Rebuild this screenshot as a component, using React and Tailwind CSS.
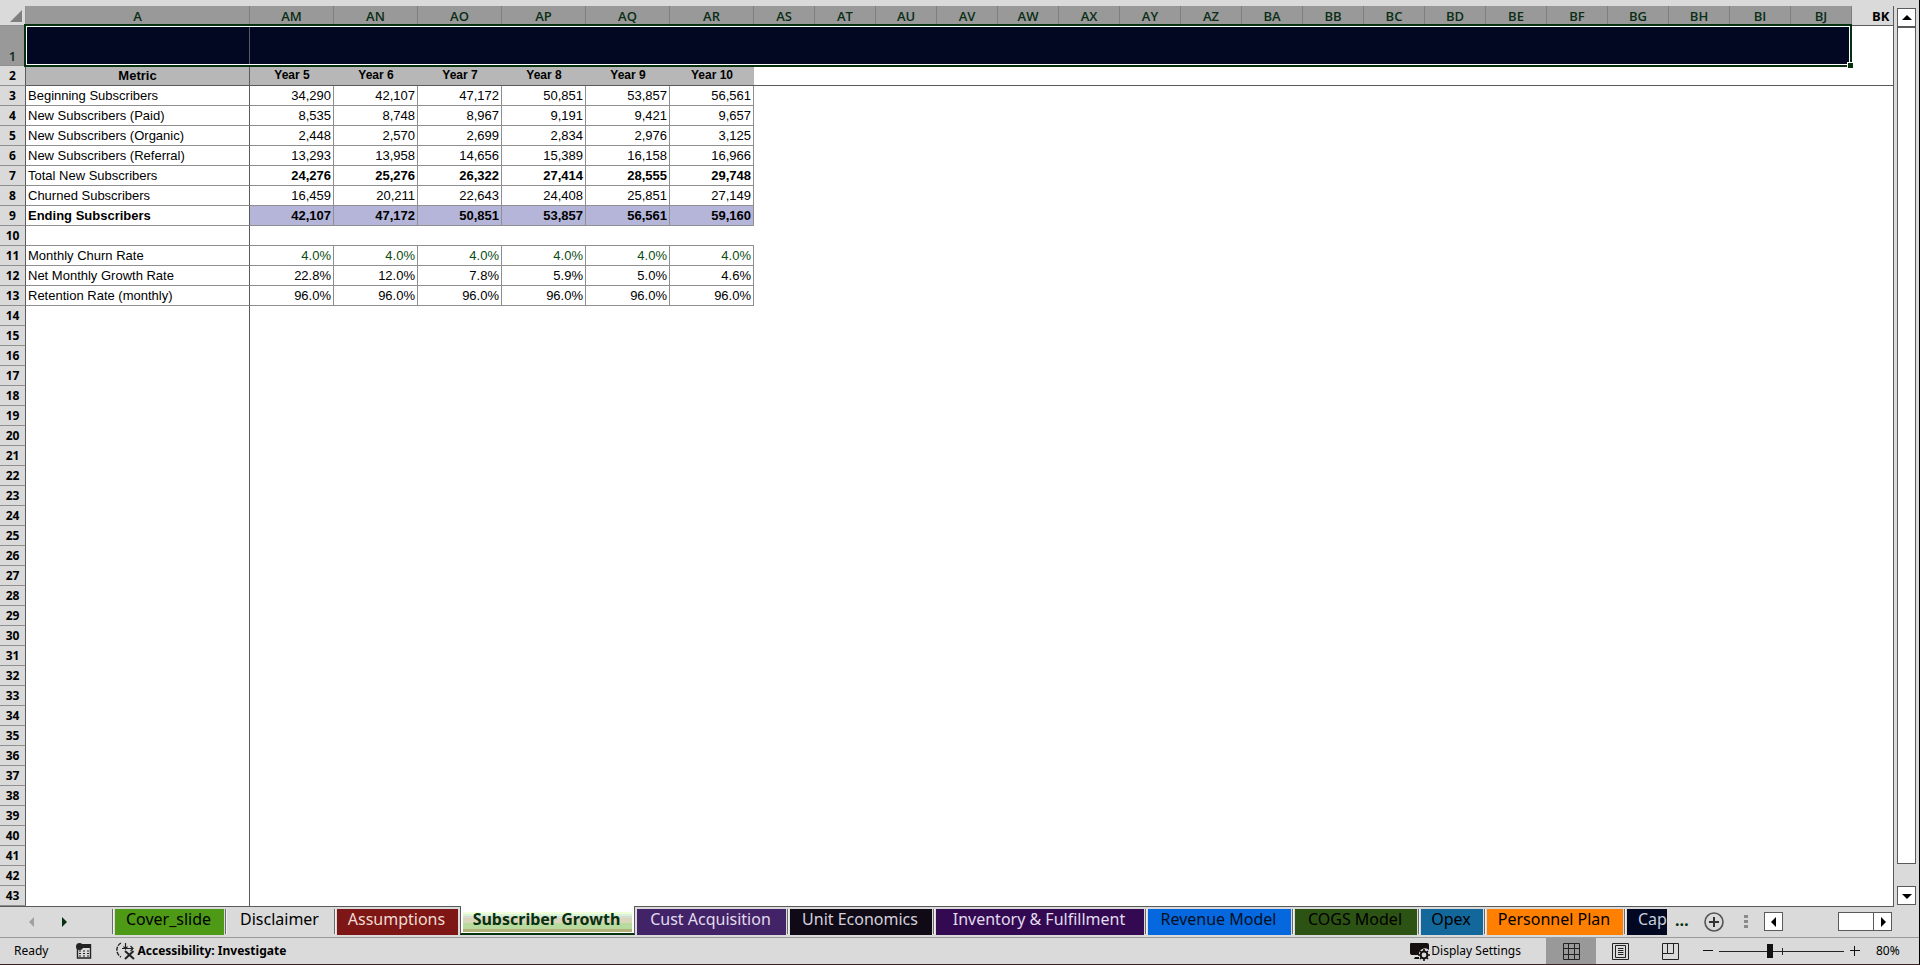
import React, { useState } from 'react';
import clsx from 'clsx';

const narrowColumns = [
  'AS', 'AT', 'AU', 'AV', 'AW', 'AX', 'AY', 'AZ', 'BA',
  'BB', 'BC', 'BD', 'BE', 'BF', 'BG', 'BH', 'BI', 'BJ',
];
const yearColumns = ['AM', 'AN', 'AO', 'AP', 'AQ', 'AR'];
const years = ['Year 5', 'Year 6', 'Year 7', 'Year 8', 'Year 9', 'Year 10'];

const rows = [
  { n: 3, label: 'Beginning Subscribers', values: ['34,290', '42,107', '47,172', '50,851', '53,857', '56,561'] },
  { n: 4, label: 'New Subscribers (Paid)', values: ['8,535', '8,748', '8,967', '9,191', '9,421', '9,657'] },
  { n: 5, label: 'New Subscribers (Organic)', values: ['2,448', '2,570', '2,699', '2,834', '2,976', '3,125'] },
  { n: 6, label: 'New Subscribers (Referral)', values: ['13,293', '13,958', '14,656', '15,389', '16,158', '16,966'] },
  { n: 7, label: 'Total New Subscribers', values: ['24,276', '25,276', '26,322', '27,414', '28,555', '29,748'], style: 'font-bold' },
  { n: 8, label: 'Churned Subscribers', values: ['16,459', '20,211', '22,643', '24,408', '25,851', '27,149'] },
  { n: 9, label: 'Ending Subscribers', values: ['42,107', '47,172', '50,851', '53,857', '56,561', '59,160'], style: 'font-bold bg-[#b4b5d9]', boldLabel: true },
  { n: 10, label: '', values: null },
  { n: 11, label: 'Monthly Churn Rate', values: ['4.0%', '4.0%', '4.0%', '4.0%', '4.0%', '4.0%'], style: 'text-[#0b4a12]' },
  { n: 12, label: 'Net Monthly Growth Rate', values: ['22.8%', '12.0%', '7.8%', '5.9%', '5.0%', '4.6%'] },
  { n: 13, label: 'Retention Rate (monthly)', values: ['96.0%', '96.0%', '96.0%', '96.0%', '96.0%', '96.0%'] },
];

const emptyRows = Array.from({ length: 30 }, (_, i) => i + 14);

const sheets = [
  { name: 'Cover_slide', width: 'w-[109px]', color: 'bg-[#4e9a16] text-black' },
  { name: 'Disclaimer', width: 'w-[105px]', color: 'text-black' },
  { name: 'Assumptions', width: 'w-[121px]', color: 'bg-[#7f1616] text-[#f0dcd0]' },
  { name: 'Subscriber Growth', width: 'w-[175px]', highlighted: true },
  { name: 'Cust Acquisition', width: 'w-[149px]', color: 'bg-[#432368] text-[#e2dcee]', noDivider: true },
  { name: 'Unit Economics', width: 'w-[142px]', color: 'bg-[#0f0a16] text-[#d4d0dc]' },
  { name: 'Inventory & Fulfillment', width: 'w-[208px]', color: 'bg-[#330a52] text-[#e2dcee]' },
  { name: 'Revenue Model', width: 'w-[143px]', color: 'bg-[#0568df] text-[#06101e]' },
  { name: 'COGS Model', width: 'w-[122px]', color: 'bg-[#2d5314] text-black' },
  { name: 'Opex', width: 'w-[62px]', color: 'bg-[#12679b] text-black' },
  { name: 'Personnel Plan', width: 'w-[136px]', color: 'bg-[#ff8000] text-black' },
  { name: 'Cap', width: 'w-[40px] pl-[11px]', color: 'bg-[#020722] text-[#c8cede]' },
];

const RowNumber = ({ children }) => (
  <th
    scope="row"
    className="h-5 border-b border-r border-b-[#8f8f8f] border-r-[#5a5a5a] bg-[#dadada] p-0 text-center align-bottom font-['Open_Sans',sans-serif] text-[12px] leading-[18px] font-bold"
  >
    {children}
  </th>
);

const ColumnHeader = ({ children, className }) => (
  <th
    scope="col"
    className={clsx(
      'h-5 border-b border-b-[#5a5a5a] p-0 align-bottom text-[13px] leading-[17px]',
      className || 'border-r border-r-[#7f7f7f] bg-[#999999] text-center font-semibold text-[#0a2e16]'
    )}
  >
    {children}
  </th>
);

const ArrowButton = ({ label, path, className }) => (
  <button
    type="button"
    aria-label={label}
    className={clsx('flex h-[19px] w-[19px] shrink-0 items-center justify-center border border-[#5a5a5a] bg-white', className)}
  >
    <svg width="10" height="10" viewBox="0 0 10 10">
      <path d={path} fill="#000" />
    </svg>
  </button>
);

const Sheet = () => (
  <div className="relative min-w-0 flex-1 border-r border-[#5a5a5a]">
    <table className="w-full table-fixed border-separate border-spacing-0 bg-white font-['Liberation_Sans',Arial,sans-serif] text-[13px] text-black">
      <colgroup>
        <col className="w-[26px]" />
        <col className="w-[224px]" />
        {yearColumns.map((c) => (
          <col key={c} className="w-[84px]" />
        ))}
        {narrowColumns.map((c) => (
          <col key={c} className="w-[61px]" />
        ))}
        <col />
      </colgroup>
      <thead className="font-['Open_Sans',sans-serif]">
        <tr>
          <td className="h-5 border-b border-r border-b-[#8f8f8f] border-r-[#8f8f8f] bg-[#dadada] p-0">
            <svg width="12" height="12" viewBox="0 0 12 12" className="ml-[10px]">
              <path d="M12 0V12H0Z" fill="#7f7f7f" />
            </svg>
          </td>
          <ColumnHeader>A</ColumnHeader>
          {yearColumns.map((c) => (
            <ColumnHeader key={c}>{c}</ColumnHeader>
          ))}
          {narrowColumns.map((c) => (
            <ColumnHeader key={c}>{c}</ColumnHeader>
          ))}
          <ColumnHeader className="bg-[#dadada] pl-5 text-left font-bold text-black">BK</ColumnHeader>
        </tr>
      </thead>
      <tbody>
        {/* Title band */}
        <tr>
          <th
            scope="row"
            className="h-10 border-b border-r border-[#8f8f8f] bg-[#999999] p-0 text-center align-bottom font-['Open_Sans',sans-serif] text-[13px] leading-[18px] font-semibold text-[#0a2e16]"
          >
            1
          </th>
          <td className="border-r border-[#5a5a5a] bg-[#020722] p-0"></td>
          <td colSpan={24} className="bg-[#020722] p-0"></td>
          <td className="p-0"></td>
        </tr>

        {/* Table headings */}
        <tr>
          <RowNumber>2</RowNumber>
          <th scope="col" className="border-b border-r border-[#5a5a5a] bg-[#b7b7b7] p-0 leading-[17px]">
            Metric
          </th>
          {years.map((y) => (
            <th key={y} scope="col" className="border-b border-[#5a5a5a] bg-[#b7b7b7] p-0 text-[12px] leading-[17px]">
              {y}
            </th>
          ))}
          <td colSpan={19} className="border-b border-[#5a5a5a] p-0"></td>
        </tr>

        {rows.map((row) => (
          <tr key={row.n}>
            <RowNumber>{row.n}</RowNumber>
            <td
              className={clsx(
                'border-b border-r border-b-[#8f8f8f] border-r-[#5a5a5a] py-0 pl-[2px] leading-[19px]',
                row.boldLabel && 'font-bold'
              )}
            >
              {row.label}
            </td>
            {row.values ? (
              row.values.map((value, i) => (
                <td
                  key={i}
                  className={clsx('border-b border-r border-[#8f8f8f] py-0 pr-[2px] text-right leading-[19px]', row.style)}
                >
                  {value}
                </td>
              ))
            ) : (
              <td colSpan={6} className="border-b border-[#8f8f8f] p-0"></td>
            )}
            <td colSpan={19} className="p-0"></td>
          </tr>
        ))}

        {emptyRows.map((n) => (
          <tr key={n}>
            <RowNumber>{n}</RowNumber>
            <td className="border-r border-[#5a5a5a] p-0"></td>
            <td colSpan={25} className="p-0"></td>
          </tr>
        ))}
      </tbody>
    </table>

    {/* Selection frame with its fill handle */}
    <div className="pointer-events-none absolute top-[18px] left-[24px] h-[43px] w-[1828px] border-2 border-[#06310f]">
      <div className="h-full border border-white"></div>
      <div className="absolute -right-[3px] -bottom-[3px] h-[6px] w-[6px] border-t border-l border-white bg-[#06310f]"></div>
    </div>
  </div>
);

const VerticalScrollbar = () => (
  <div className="flex w-[25px] shrink-0 flex-col pt-[2px] pr-[3px] pb-px pl-[3px]">
    <ArrowButton label="Scroll up" path="M0 7L5 2L10 7Z" />
    <div className="flex-1 pb-[22px]">
      <div className="h-full w-[19px] border border-[#5a5a5a] bg-white"></div>
    </div>
    <ArrowButton label="Scroll down" path="M0 3H10L5 8Z" />
  </div>
);

const SheetTab = ({ sheet, selected, onSelect }) => {
  if (sheet.highlighted) {
    return (
      <button
        type="button"
        role="tab"
        aria-selected={selected}
        onClick={onSelect}
        className={clsx(
          'relative mx-[2px] -mt-px h-[29px] shrink-0 border-x border-b-2 border-x-[#5a5a5a] border-b-[#06310f] bg-white px-[2px] pt-[6px] pb-px text-[16px] leading-[15px] font-bold whitespace-nowrap text-[#06310f]',
          sheet.width
        )}
      >
        <span className="block h-5 bg-[linear-gradient(#f0ffd8_0_2px,#d8f5dc_2px_4px,#d8dcd4_4px_6px,#dad6ba_6px_11px,#b8da9e_11px_17px,#b0b078_17px)] pr-[2px]">
          {sheet.name}
        </span>
      </button>
    );
  }

  return (
    <div className="flex shrink-0 items-start pt-[2px]">
      {!sheet.noDivider && <span className="mx-px h-[25px] w-[2px] border-l border-[#6a6a6a] bg-[#f0f0f0]"></span>}
      <button
        type="button"
        role="tab"
        aria-selected={selected}
        onClick={onSelect}
        className={clsx('h-[26px] overflow-hidden pr-[2px] pb-[5px] text-[16px] leading-[21px] whitespace-nowrap', sheet.width, sheet.color)}
      >
        {sheet.name}
      </button>
    </div>
  );
};

const SheetTabs = ({ active, onSelect }) => (
  <div className="flex h-8 items-start border-b border-[#9a9a9a] font-['Noto_Sans',sans-serif]">
    <div className="flex h-full flex-1 items-start border-t border-[#5a5a5a] pr-[2px]">
      <div className="flex w-[111px] shrink-0 items-center gap-6 pt-[9px] pl-[28px]">
        <button type="button" aria-label="Previous sheets">
          <svg width="8" height="12" viewBox="0 0 8 12">
            <path d="M6 1V11L1 6Z" fill="#a0a0a0" />
          </svg>
        </button>
        <button type="button" aria-label="More sheets">
          <svg width="8" height="12" viewBox="0 0 8 12">
            <path d="M2 1V11L7 6Z" fill="#06310f" />
          </svg>
        </button>
      </div>

      <div role="tablist" aria-label="Sheets" className="flex items-start">
        {sheets.map((sheet) => (
          <SheetTab key={sheet.name} sheet={sheet} selected={active === sheet.name} onSelect={() => onSelect(sheet.name)} />
        ))}
      </div>

      <button type="button" aria-label="All sheets" className="ml-2 pt-[2px] text-[16px] leading-[22px] font-bold text-[#06310f]">
        …
      </button>
      <div className="ml-auto flex h-full items-center pb-px">
        <button type="button" aria-label="New sheet">
          <svg width="20" height="20" viewBox="0 0 20 20" fill="none">
            <circle cx="10" cy="10" r="9" stroke="#555" strokeWidth="1.6" />
            <path d="M10 5V15M5 10H15" stroke="#333" strokeWidth="2" />
          </svg>
        </button>
        <svg width="4" height="14" viewBox="0 0 4 14" className="ml-5" fill="#8a8a8a">
          <path d="M0 0H4V3H0ZM0 5H4V8H0ZM0 10H4V13H0Z" />
        </svg>
        <ArrowButton label="Scroll left" path="M7 0V10L2 5Z" className="ml-4" />
        <div className="w-[55px]"></div>
        <div className="h-[19px] w-[36px] border border-[#5a5a5a] bg-white"></div>
        <ArrowButton label="Scroll right" path="M3 0V10L8 5Z" className="-ml-px" />
      </div>
    </div>
    <div className="w-[25px] shrink-0"></div>
  </div>
);

const StatusBar = () => {
  const [zoom, setZoom] = useState(80);

  return (
    <div className="flex h-[26px] items-center font-['Noto_Sans',sans-serif] text-[12px] text-black">
      <span className="ml-[14px]">Ready</span>
      <button type="button" aria-label="Record macro" className="ml-7">
        <svg width="16" height="16" viewBox="0 0 16 16">
          <path d="M1.5 3V15H14.5V2H6" fill="none" stroke="#222" strokeWidth="1.4" />
          <path d="M6 1H15V5H6Z" fill="#222" />
          <circle cx="3.5" cy="3.5" r="3.5" fill="#222" />
          <path d="M3 8H5M7 8H9M11 8H13M3 10.5H5M7 10.5H9M11 10.5H13M3 13H5M7 13H9M11 13H13" stroke="#222" strokeWidth="1.2" />
        </svg>
      </button>
      <button type="button" className="ml-[23px] flex items-center gap-[2px] font-bold">
        <svg width="20" height="18" viewBox="0 0 20 18" fill="none" stroke="#222" strokeWidth="1.4">
          <path d="M6 1A8 8 0 0 0 6 15" strokeDasharray="4 1.2" />
          <path d="M7 6.5H18M10.5 1V7M8.5 4.5L10.5 7L12.5 4.5M15.5 4L18 6.5L15.5 9" strokeWidth="1.2" />
          <path d="M10 9L19 17M18.5 9L10 17" strokeWidth="2" />
        </svg>
        Accessibility: Investigate
      </button>

      <div className="ml-auto flex h-full items-center">
        <button type="button" className="mr-[25px] flex items-center gap-px">
          <svg width="20" height="19" viewBox="0 0 20 19">
            <path d="M1 1H17Q19 1 19 3V8A6 6 0 0 0 9 13H2Q0 13 0 11V2Q0 1 1 1ZM5 15H9V17H4Z" fill="#15100f" />
            <circle cx="14" cy="13" r="3.4" fill="none" stroke="#15100f" strokeWidth="2" />
            <path d="M14 7V10M14 16V19M8 13H11M17 13H20M10 9L12 11M16 15L18 17M18 9L16 11M12 15L10 17" stroke="#15100f" strokeWidth="1.6" />
          </svg>
          Display Settings
        </button>
        <button type="button" aria-label="Normal view" className="flex h-full w-[50px] items-center justify-center bg-[#999999]">
          <svg width="17" height="17" viewBox="0 0 17 17" fill="none" stroke="#222">
            <path d="M0.5 0.5H16.5V16.5H0.5ZM5.5 0V17M11.5 0V17M0 5.5H17M0 11.5H17" />
          </svg>
        </button>
        <button type="button" aria-label="Page layout view" className="flex h-full w-[48px] items-center justify-center">
          <svg width="17" height="17" viewBox="0 0 17 17" fill="none" stroke="#222">
            <path d="M0.5 0.5H16.5V16.5H0.5ZM3.5 2.5H13.5V14.5H3.5ZM6 5.5H11.5M6 7.5H11.5M6 9.5H11.5M6 11.5H11.5" />
          </svg>
        </button>
        <button type="button" aria-label="Page break preview" className="flex h-full w-[52px] items-center justify-center">
          <svg width="17" height="17" viewBox="0 0 17 17" fill="none" stroke="#222">
            <path d="M0.5 0.5H16.5V16.5H0.5ZM5.5 0V10.5H0M5.5 10.5H11.5V0" />
          </svg>
        </button>
        <button type="button" aria-label="Zoom out" className="ml-[7px]" onClick={() => setZoom(Math.max(10, zoom - 10))}>
          <svg width="10" height="10" viewBox="0 0 10 10" stroke="#111">
            <path d="M0 4.5H10" />
          </svg>
        </button>
        <div className="relative mx-[6px] flex items-center">
          <input
            type="range"
            aria-label="Zoom"
            min="0"
            max="200"
            value={zoom}
            onChange={(e) => setZoom(Number(e.target.value))}
            className="h-[14px] w-[125px] appearance-none bg-transparent [&::-webkit-slider-runnable-track]:h-px [&::-webkit-slider-runnable-track]:bg-[#222] [&::-webkit-slider-thumb]:-mt-[7px] [&::-webkit-slider-thumb]:h-[14px] [&::-webkit-slider-thumb]:w-[6px] [&::-webkit-slider-thumb]:appearance-none [&::-webkit-slider-thumb]:bg-[#111]"
          />
          <span className="pointer-events-none absolute left-1/2 h-[7px] w-px bg-[#222]"></span>
        </div>
        <button type="button" aria-label="Zoom in" onClick={() => setZoom(Math.min(200, zoom + 10))}>
          <svg width="10" height="10" viewBox="0 0 10 10" stroke="#111">
            <path d="M0 4.5H10M4.5 0V10" />
          </svg>
        </button>
        <span className="ml-4 w-[43px]">{zoom}%</span>
      </div>
    </div>
  );
};

const App = () => {
  const [active, setActive] = useState('Subscriber Growth');

  return (
    <div className="border-r border-b border-r-black border-b-[#3a2225] bg-[#dadada] pt-[6px]">
      <div className="flex">
        <Sheet />
        <VerticalScrollbar />
      </div>
      <SheetTabs active={active} onSelect={setActive} />
      <StatusBar />
    </div>
  );
};

export default App;
